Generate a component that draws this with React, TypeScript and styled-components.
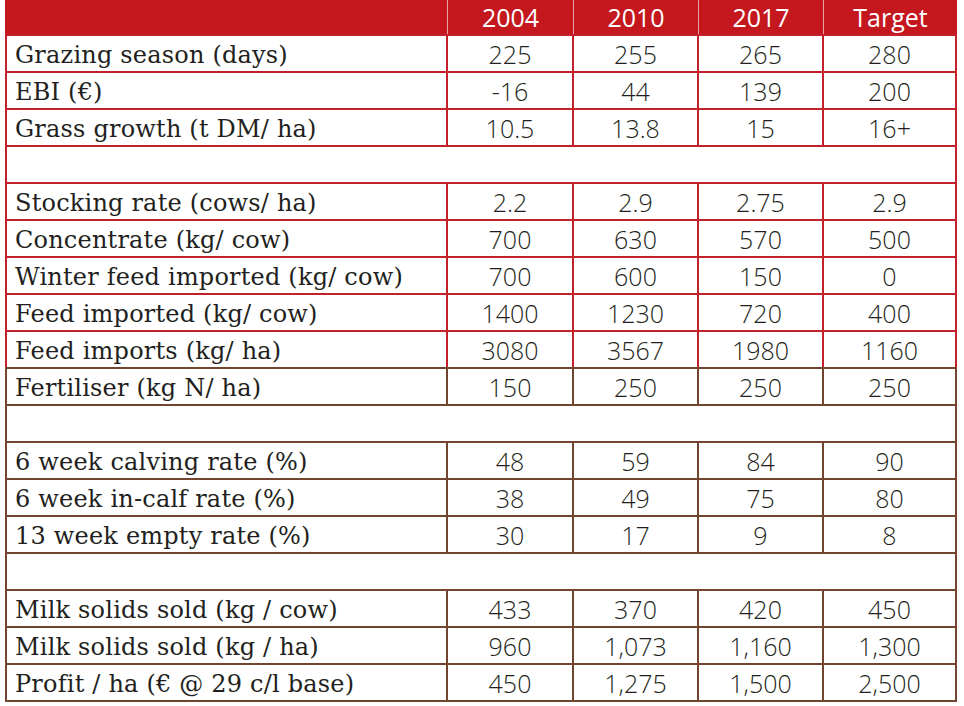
import React from "react";
import styled, { createGlobalStyle } from "styled-components";

const GlobalStyle = createGlobalStyle`
  html, body {
    margin: 0;
    padding: 0;
    background: #ffffff;
  }
`;

const RED = "#c2202a";
const BROWN = "#724530";

type Row = { label: string; values: string[]; brown?: boolean } | { blank: true; brown?: boolean };

const rows: Row[] = [
  { label: "Grazing season (days)", values: ["225", "255", "265", "280"] },
  { label: "EBI (€)", values: ["-16", "44", "139", "200"] },
  { label: "Grass growth (t DM/ ha)", values: ["10.5", "13.8", "15", "16+"] },
  { blank: true },
  { label: "Stocking rate (cows/ ha)", values: ["2.2", "2.9", "2.75", "2.9"] },
  { label: "Concentrate (kg/ cow)", values: ["700", "630", "570", "500"] },
  { label: "Winter feed imported (kg/ cow)", values: ["700", "600", "150", "0"] },
  { label: "Feed imported (kg/ cow)", values: ["1400", "1230", "720", "400"] },
  { label: "Feed imports (kg/ ha)", values: ["3080", "3567", "1980", "1160"] },
  { label: "Fertiliser (kg N/ ha)", values: ["150", "250", "250", "250"], brown: true },
  { blank: true, brown: true },
  { label: "6 week calving rate (%)", values: ["48", "59", "84", "90"], brown: true },
  { label: "6 week in-calf rate (%)", values: ["38", "49", "75", "80"], brown: true },
  { label: "13 week empty rate (%)", values: ["30", "17", "9", "8"], brown: true },
  { blank: true, brown: true },
  { label: "Milk solids sold (kg / cow)", values: ["433", "370", "420", "450"], brown: true },
  { label: "Milk solids sold (kg / ha)", values: ["960", "1,073", "1,160", "1,300"], brown: true },
  { label: "Profit / ha (€ @ 29 c/l base)", values: ["450", "1,275", "1,500", "2,500"], brown: true },
];

const Table = styled.div`
  margin-left: 5px;
  width: 952px;
  display: flex;
  flex-direction: column;
`;

const HeaderRow = styled.div`
  display: grid;
  grid-template-columns: 443px 126px 125px 125px 133px;
  height: 34px;
  background: #c4171e;
`;

const HeaderCell = styled.div<{ $last?: boolean }>`
  display: flex;
  align-items: center;
  justify-content: center;
  border-right: ${(p) => (p.$last ? "none" : "1px solid #e9a3a6")};
  color: #ffffff;
  font-family: "Open Sans", "Noto Sans", sans-serif;
  font-size: 25px;
  line-height: 1;
  padding-top: 1px;
`;

const BodyRow = styled.div<{ $brown?: boolean; $last?: boolean }>`
  display: grid;
  grid-template-columns: 441px 126px 125px 125px 131px;
  box-sizing: border-box;
  height: ${(p) => (p.$last ? 39 : 37)}px;
  border-top: 2px solid ${(p) => (p.$brown ? BROWN : RED)};
  border-left: 2px solid ${(p) => (p.$brown ? BROWN : RED)};
  border-right: 2px solid ${(p) => (p.$brown ? BROWN : RED)};
  border-bottom: ${(p) => (p.$last ? `2px solid ${BROWN}` : "none")};
`;

const BlankRow = styled(BodyRow)`
  display: block;
`;

const LabelCell = styled.div<{ $brown?: boolean }>`
  display: flex;
  align-items: center;
  padding-left: 8px;
  padding-top: 3px;
  border-right: 2px solid ${(p) => (p.$brown ? BROWN : RED)};
  color: #231f20;
  font-family: "DejaVu Serif", serif;
  font-weight: 300;
  font-size: 24px;
  letter-spacing: 0.2px;
  white-space: nowrap;
  overflow: hidden;
`;

const ValueCell = styled.div<{ $brown?: boolean; $last?: boolean }>`
  display: flex;
  align-items: center;
  justify-content: center;
  border-right: ${(p) => (p.$last ? "none" : `2px solid ${p.$brown ? BROWN : RED}`)};
  color: #231f20;
  font-family: "Open Sans", "Noto Sans", sans-serif;
  font-weight: 300;
  font-size: 25px;
  padding-top: 1px;
`;

export default function App() {
  return (
    <>
      <GlobalStyle />
      <Table>
        <HeaderRow>
          <HeaderCell />
          <HeaderCell>2004</HeaderCell>
          <HeaderCell>2010</HeaderCell>
          <HeaderCell>2017</HeaderCell>
          <HeaderCell $last>Target</HeaderCell>
        </HeaderRow>
        {rows.map((row, i) => {
          const last = i === rows.length - 1;
          if ("blank" in row) {
            return <BlankRow key={i} $brown={row.brown} $last={last} />;
          }
          return (
            <BodyRow key={i} $brown={row.brown} $last={last}>
              <LabelCell $brown={row.brown}>{row.label}</LabelCell>
              {row.values.map((v, j) => (
                <ValueCell key={j} $brown={row.brown} $last={j === 3}>
                  {v}
                </ValueCell>
              ))}
            </BodyRow>
          );
        })}
      </Table>
    </>
  );
}
